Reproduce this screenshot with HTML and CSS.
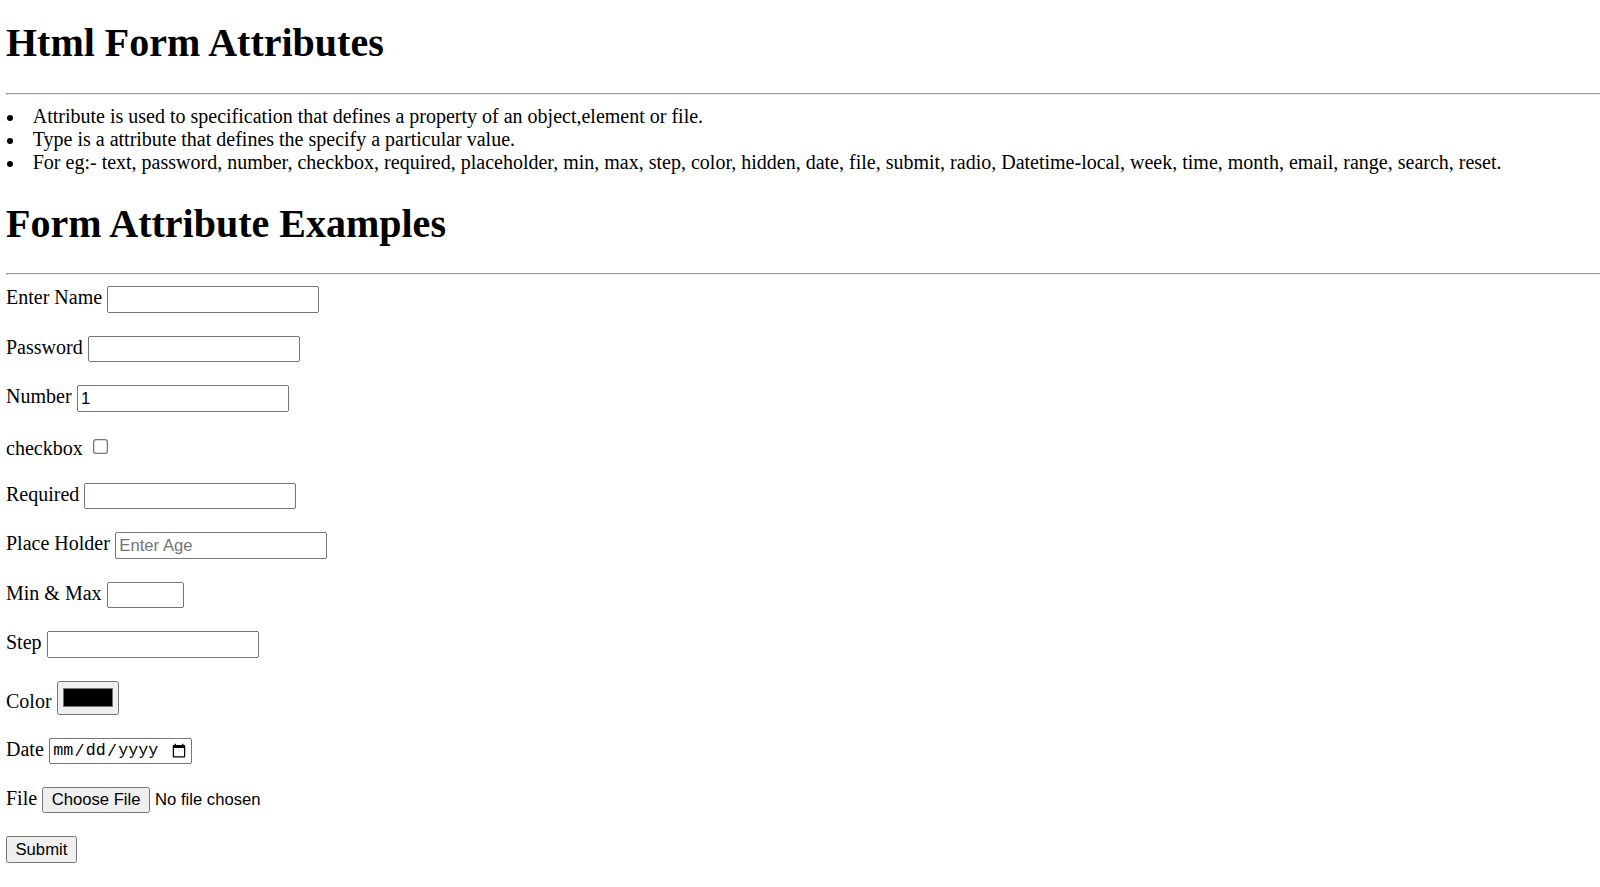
FILE: index.html
```html
<!DOCTYPE html>
<html lang="en">
<head>
<meta charset="utf-8">
<title>Html Form Attributes</title>
<link rel="stylesheet" href="styles.css">
</head>
<body class="page">
<h1 class="heading heading-first">Html Form Attributes</h1>
<hr class="rule">
<ul class="notes">
<li class="note">Attribute is used to specification that defines a property of an object,element or file.</li>
<li class="note">Type is a attribute that defines the specify a particular value.</li>
<li class="note">For eg:- text, password, number, checkbox, required, placeholder, min, max, step, color, hidden, date, file, submit, radio, Datetime-local, week, time, month, email, range, search, reset.</li>
</ul>
<h1 class="heading heading-second">Form Attribute Examples</h1>
<hr class="rule rule-form">
<form class="demo" onsubmit="return false">
<label>Enter Name</label> <input type="text" class="field"><br><br>
<label>Password</label> <input type="password" class="field"><br><br>
<label>Number</label> <input type="number" class="field" value="1"><br><br>
<label>checkbox</label> <input type="checkbox"><br><br>
<label>Required</label> <input type="text" class="field" required><br><br>
<label>Place Holder</label> <input type="text" class="field" placeholder="Enter Age"><br><br>
<label>Min &amp; Max</label> <input type="number" class="field field-small" min="1" max="10"><br><br>
<label>Step</label> <input type="number" class="field" step="5"><br><br>
<label>Color</label> <input type="color"><br><br>
<label>Date</label> <input type="date" class="date-field"><br><br>
<label>File</label> <input type="file"><br><br>
<input type="submit" value="Submit">
</form>
</body>
</html>
```
FILE: styles.css
```css
html {
  zoom: 1.25;
}
.page {
  margin: 0 0 0 4.8px;
  font-family: "Liberation Serif", "Times New Roman", serif;
  font-size: 16px;
  color: #000;
  background: #fff;
}
.heading {
  font-size: 32px;
  font-weight: bold;
  margin: 0 0 21.44px;
}
.heading-first {
  margin-top: 15.1px;
}
.heading-second {
  margin-top: 20.7px;
}
.rule {
  margin: 8px -10px 8px 0;
}
.rule-form {
  margin-bottom: 8.8px;
}
.notes {
  margin: 0;
  padding: 0;
  list-style: none;
}
.note::before {
  content: "";
  display: inline-block;
  width: 5px;
  height: 5px;
  border-radius: 50%;
  background: #000;
  margin: 0 15.6px 0 0.8px;
  vertical-align: middle;
}
.demo input {
  font-family: "Liberation Sans", Arial, sans-serif;
}
.field {
  box-sizing: border-box;
  width: 169.6px;
}
.field-small {
  width: 61.6px;
}
.demo .date-field {
  box-sizing: border-box;
  width: 114.4px;
  font-family: "Liberation Mono", monospace;
}
```
